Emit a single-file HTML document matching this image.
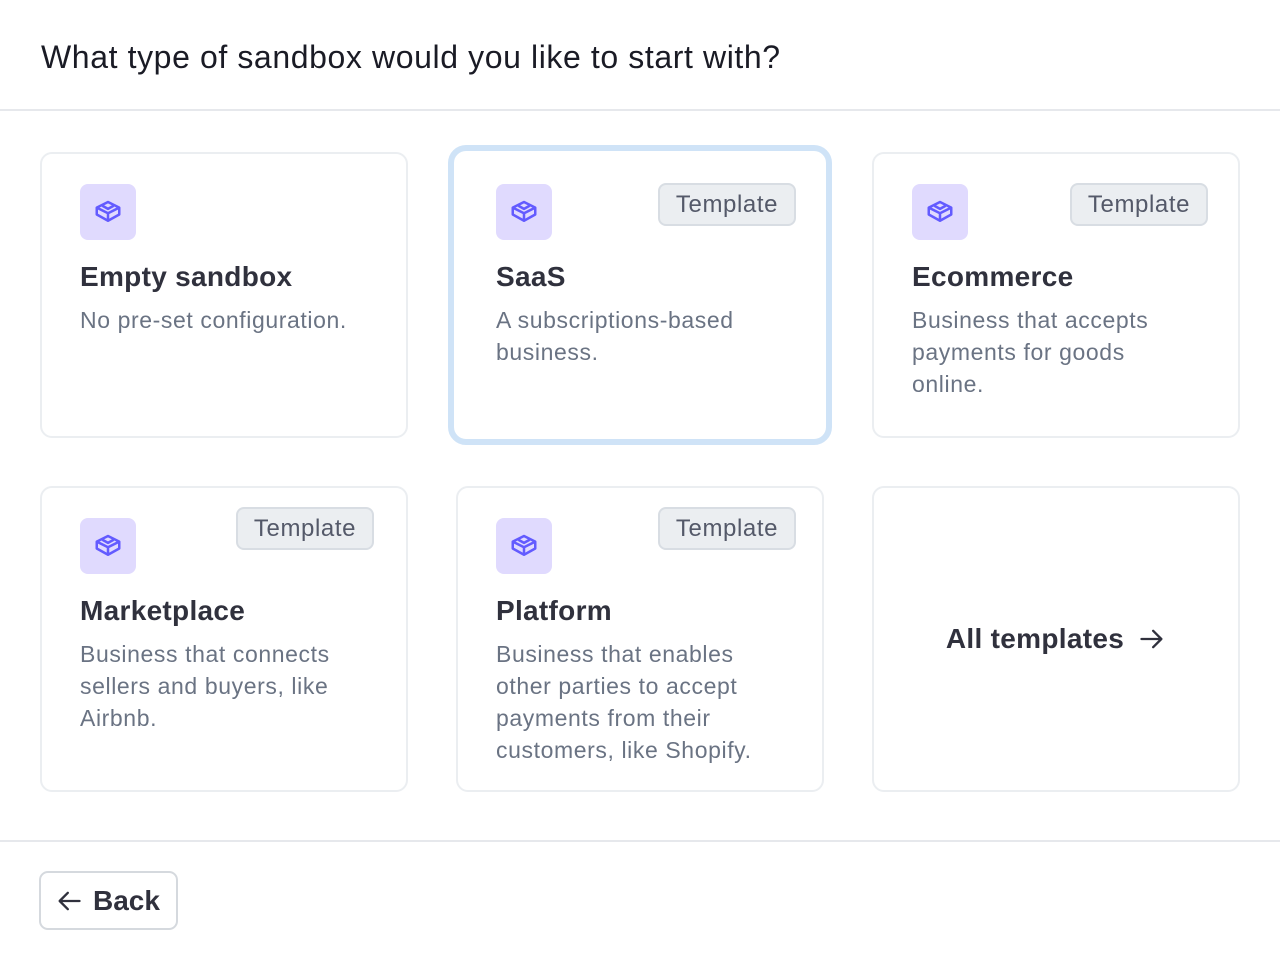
<!DOCTYPE html>
<html><head><style>
*{box-sizing:border-box;margin:0;padding:0}
body{width:1280px;height:960px;background:#fff;font-family:"Liberation Sans",sans-serif;position:relative;overflow:hidden;color:#30313d}
h1{position:absolute;left:41px;top:39px;font-size:32px;font-weight:400;color:#1a1b25;letter-spacing:0.6px}
.hr{position:absolute;left:0;width:1280px;height:2px;background:#e6e8ec}
.card{position:absolute;border:2px solid #ebeef1;border-radius:12px;background:#fff}
.ic{position:absolute;left:38px;top:30px;width:56px;height:56px;border-radius:8px;background:#e0dafe;display:flex;align-items:center;justify-content:center}
.badge{position:absolute;top:29px;width:138px;height:43px;border:2px solid #d8dde3;background:#ebeef1;border-radius:8px;font-size:24px;color:#545969;line-height:39px;text-align:center;letter-spacing:0.6px}
.t{position:absolute;left:38px;top:107px;font-size:28px;font-weight:700;color:#30313d;letter-spacing:0.3px}
.d{position:absolute;left:38px;top:150px;font-size:23px;line-height:32px;color:#6a7383;width:275px;letter-spacing:0.6px}
.ring{position:absolute;left:448px;top:145px;width:384px;height:300px;border:6px solid #cfe3f7;border-radius:18px}
.back{position:absolute;left:39px;top:871px;width:139px;height:59px;border:2px solid #d5d9de;border-radius:9px;font-size:28px;font-weight:700;color:#30313d;display:flex;align-items:center;padding-left:14px;gap:10px}
</style></head><body>
<h1>What type of sandbox would you like to start with?</h1>
<div class="hr" style="top:109px"></div>

<div class="card" style="left:40px;top:152px;width:368px;height:286px">
<div class="ic"><svg width="30" height="30" viewBox="0 0 24 24" fill="none" stroke="#635bff" stroke-width="2" stroke-linejoin="round"><path d="M12 4L21 8.5V14L12 19L3 14V8.5Z"/><path d="M3 8.5L12 13L21 8.5M12 13V19M7.5 7L12 9.5L16.5 7"/></svg></div>
<div class="t">Empty sandbox</div><div class="d" style="width:320px">No pre-set configuration.</div></div>

<div class="ring"></div>
<div class="card" style="left:456px;top:152px;width:368px;height:286px;border-color:#fff">
<div class="ic"><svg width="30" height="30" viewBox="0 0 24 24" fill="none" stroke="#635bff" stroke-width="2" stroke-linejoin="round"><path d="M12 4L21 8.5V14L12 19L3 14V8.5Z"/><path d="M3 8.5L12 13L21 8.5M12 13V19M7.5 7L12 9.5L16.5 7"/></svg></div>
<div class="badge" style="left:200px">Template</div>
<div class="t">SaaS</div><div class="d">A subscriptions-based business.</div></div>

<div class="card" style="left:872px;top:152px;width:368px;height:286px">
<div class="ic"><svg width="30" height="30" viewBox="0 0 24 24" fill="none" stroke="#635bff" stroke-width="2" stroke-linejoin="round"><path d="M12 4L21 8.5V14L12 19L3 14V8.5Z"/><path d="M3 8.5L12 13L21 8.5M12 13V19M7.5 7L12 9.5L16.5 7"/></svg></div>
<div class="badge" style="left:196px">Template</div>
<div class="t">Ecommerce</div><div class="d" style="width:262px">Business that accepts payments for goods online.</div></div>

<div class="card" style="left:40px;top:486px;width:368px;height:306px">
<div class="ic"><svg width="30" height="30" viewBox="0 0 24 24" fill="none" stroke="#635bff" stroke-width="2" stroke-linejoin="round"><path d="M12 4L21 8.5V14L12 19L3 14V8.5Z"/><path d="M3 8.5L12 13L21 8.5M12 13V19M7.5 7L12 9.5L16.5 7"/></svg></div>
<div class="badge" style="left:194px;top:19px">Template</div>
<div class="t">Marketplace</div><div class="d">Business that connects sellers and buyers, like Airbnb.</div></div>

<div class="card" style="left:456px;top:486px;width:368px;height:306px">
<div class="ic"><svg width="30" height="30" viewBox="0 0 24 24" fill="none" stroke="#635bff" stroke-width="2" stroke-linejoin="round"><path d="M12 4L21 8.5V14L12 19L3 14V8.5Z"/><path d="M3 8.5L12 13L21 8.5M12 13V19M7.5 7L12 9.5L16.5 7"/></svg></div>
<div class="badge" style="left:200px;top:19px">Template</div>
<div class="t">Platform</div><div class="d" style="width:275px">Business that enables other parties to accept payments from their customers, like Shopify.</div></div>

<div class="card" style="left:872px;top:486px;width:368px;height:306px;display:flex;align-items:center;justify-content:center">
<span style="font-size:28px;font-weight:700;color:#30313d;display:flex;align-items:center;gap:14px;letter-spacing:0.3px">All templates <svg width="28" height="28" viewBox="0 0 24 24" fill="none" stroke="#30313d" stroke-width="2" stroke-linecap="round" stroke-linejoin="round"><path d="M3 12H20M13 5L20 12L13 19"/></svg></span></div>

<div class="hr" style="top:840px"></div>
<div class="back"><svg width="28" height="28" viewBox="0 0 24 24" fill="none" stroke="#30313d" stroke-width="2" stroke-linecap="round" stroke-linejoin="round"><path d="M21 12H4M11 5L4 12L11 19"/></svg>Back</div>
</body></html>
